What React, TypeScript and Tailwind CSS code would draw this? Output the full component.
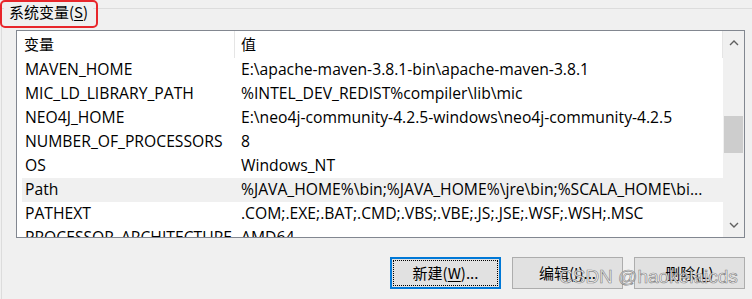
const rows: [string, string][] = [
  ["MAVEN_HOME", "E:\\apache-maven-3.8.1-bin\\apache-maven-3.8.1"],
  ["MIC_LD_LIBRARY_PATH", "%INTEL_DEV_REDIST%compiler\\lib\\mic"],
  ["NEO4J_HOME", "E:\\neo4j-community-4.2.5-windows\\neo4j-community-4.2.5"],
  ["NUMBER_OF_PROCESSORS", "8"],
  ["OS", "Windows_NT"],
  ["Path", "%JAVA_HOME%\\bin;%JAVA_HOME%\\jre\\bin;%SCALA_HOME\\bi..."],
  ["PATHEXT", ".COM;.EXE;.BAT;.CMD;.VBS;.VBE;.JS;.JSE;.WSF;.WSH;.MSC"],
  ["PROCESSOR_ARCHITECTURE", "AMD64"],
]

function Chevron({ up }: { up?: boolean }) {
  return (
    <svg width="10" height="6" viewBox="0 0 10 6" fill="none">
      <polyline
        points={up ? "1,5 5,1 9,5" : "1,1 5,5 9,1"}
        stroke="#606060"
        strokeWidth="1.4"
      />
    </svg>
  )
}

export default function App() {
  return (
    <div className="relative w-[752px] h-[299px] overflow-hidden bg-[#f0f0f0] text-black font-['Open_Sans','Noto_Sans_CJK_SC',sans-serif]">
      {/* group box */}
      <div className="mt-[8px] ml-[1px] h-[291px] border-t border-l border-[#dcdcdc]">
        {/* list view */}
        <div className="ml-[14px] mt-[21px] w-[729px] h-[208px] border border-[#828790] bg-white flex">
          <div className="flex-1 overflow-hidden">
            <div className="h-[27px] flex items-center border-r border-[#e5e5e5] text-[15px] font-['Noto_Sans_CJK_SC',sans-serif]">
              <div className="w-[218px] h-full pl-[7px] flex items-center border-r border-[#e5e5e5]">变量</div>
              <div className="pl-[6px]">值</div>
            </div>
            <div className="ml-[5px] text-[15.7px]">
              {rows.map(([name, value]) => (
                <div
                  key={name}
                  className={
                    "h-[24px] flex items-center whitespace-nowrap " +
                    (name === "Path" ? "bg-[#f0f0f0]" : "")
                  }
                >
                  <div className="w-[219px] pl-[3px] shrink-0">{name}</div>
                  <div>{value}</div>
                </div>
              ))}
            </div>
          </div>
          {/* scrollbar */}
          <div className="w-[21px] bg-[#f0f0f0] flex flex-col">
            <div className="h-[24px] flex items-center justify-center">
              <Chevron up />
            </div>
            <div className="flex-1">
              <div className="mt-[61px] mx-[1px] h-[37px] bg-[#cdcdcd]" />
            </div>
            <div className="h-[24px] flex items-center justify-center">
              <Chevron />
            </div>
          </div>
        </div>

        {/* buttons */}
        <div className="ml-[14px] mt-[19px] w-[729px] flex justify-end gap-[11px] text-[15px] font-['Noto_Sans_CJK_SC',sans-serif]">
          <button className="w-[111px] h-[32px] bg-[#e1e1e1] border-2 border-[#0078d7] p-[1px]">
            <span className="w-full h-full flex items-center justify-center border border-dotted border-black">
              新建(<span className="underline underline-offset-2">W</span>)...
            </span>
          </button>
          <button className="w-[111px] h-[32px] bg-[#e1e1e1] border border-[#adadad] flex items-center justify-center">
            编辑(<span className="underline underline-offset-2">I</span>)...
          </button>
          <button className="w-[111px] h-[32px] bg-[#e1e1e1] border border-[#adadad] flex items-center justify-center">
            删除(<span className="underline underline-offset-2">L</span>)
          </button>
        </div>
      </div>

      {/* group title */}
      <div className="absolute top-[2px] left-[4px] px-[5px] bg-[#f0f0f0] text-[15px] leading-[20px] font-['Noto_Sans_CJK_SC',sans-serif]">
        系统变量(<span className="underline underline-offset-2">S</span>)
      </div>

      {/* red annotation box */}
      <div className="absolute top-0 left-0 w-[98px] h-[28px] border-2 border-[#e8262b] rounded-[5px]" />

      {/* watermark */}
      <div className="absolute left-[559px] top-[267px] text-[19px] leading-none whitespace-nowrap font-['Liberation_Sans',sans-serif] text-[rgba(255,255,255,0.85)] [-webkit-text-stroke:0.7px_rgba(100,100,100,0.75)]">
        CSDN @haokelaicds
      </div>
    </div>
  )
}
